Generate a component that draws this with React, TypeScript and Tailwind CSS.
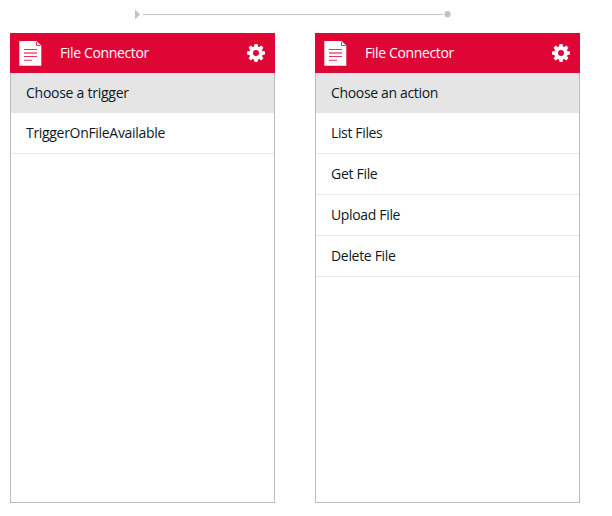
type Item = { label: string; spacing: string };

type Panel = { prompt: Item; items: Item[] };

const panels: Panel[] = [
  {
    prompt: { label: "Choose a trigger", spacing: "tracking-[-0.26px]" },
    items: [{ label: "TriggerOnFileAvailable", spacing: "tracking-[-0.31px]" }],
  },
  {
    prompt: { label: "Choose an action", spacing: "tracking-[-0.34px]" },
    items: [
      { label: "List Files", spacing: "tracking-[-0.36px]" },
      { label: "Get File", spacing: "tracking-[-0.3px]" },
      { label: "Upload File", spacing: "tracking-[-0.34px]" },
      { label: "Delete File", spacing: "tracking-[-0.32px]" },
    ],
  },
];

function FileIcon() {
  return (
    <svg width="23" height="26" viewBox="0 0 23 26" className="shrink-0">
      <path d="M0.3 1H17.5L22.3 5.5V25.7H0.3Z" fill="#fff" />
      <path d="M17.5 2V5.5H21.5" fill="none" stroke="#e5365c" strokeWidth="1" />
      <path d="M5 9.5H18M5 16.5H18M5 20.3H13" stroke="#e5365c" strokeWidth="1.1" />
      <path d="M5 13H18" stroke="#ef7f98" strokeWidth="2" />
    </svg>
  );
}

function GearIcon() {
  return (
    <svg width="18" height="18" viewBox="-9 -9 18 18" className="shrink-0" fill="#fff">
      {[0, 45, 90, 135].map((angle) => (
        <path key={angle} d="M-2.1 -6L-1.5 -9H1.5L2.1 -6V6L1.5 9H-1.5L-2.1 6Z" transform={`rotate(${angle})`} />
      ))}
      <circle r="6.8" />
      <circle r="3" fill="#df0535" />
    </svg>
  );
}

function ConnectorPanel({ prompt, items }: Panel) {
  return (
    <section className="flex h-[470px] w-[265px] flex-col">
      <header className="flex h-10 shrink-0 items-center bg-[#df0535] pr-2.5 pl-[9px] text-white">
        <FileIcon />
        <h2 className="ml-[18px] flex-1 tracking-[-0.36px]">File Connector</h2>
        <GearIcon />
      </header>
      <div className="flex-1 border border-t-0 border-[#bcbcbc]">
        <div className={`flex h-10 items-center bg-[#e5e5e5] px-[15px] ${prompt.spacing}`}>{prompt.label}</div>
        <ul>
          {items.map((item) => (
            <li key={item.label} className={`flex h-[41px] items-center border-b border-[#e9e9e9] px-[15px] ${item.spacing}`}>
              {item.label}
            </li>
          ))}
        </ul>
      </div>
    </section>
  );
}

export default function App() {
  return (
    <main className="h-[516px] w-[612px] bg-white font-['Open_Sans','Noto_Sans',sans-serif] text-[14px] leading-5 text-[#0b1a26]">
      <div className="flex h-[33px] items-start pt-[9px] pl-[135px]">
        <svg width="317" height="11" viewBox="0 0 317 11" fill="#bfc3cb">
          <path d="M0 0.5L5 5.5L0 10.5Z" />
          <path d="M8 5H308V6H8Z" />
          <circle cx="312.5" cy="5.2" r="3.1" />
        </svg>
      </div>
      <div className="flex gap-10 pl-2.5">
        {panels.map((panel) => (
          <ConnectorPanel key={panel.prompt.label} {...panel} />
        ))}
      </div>
    </main>
  );
}
